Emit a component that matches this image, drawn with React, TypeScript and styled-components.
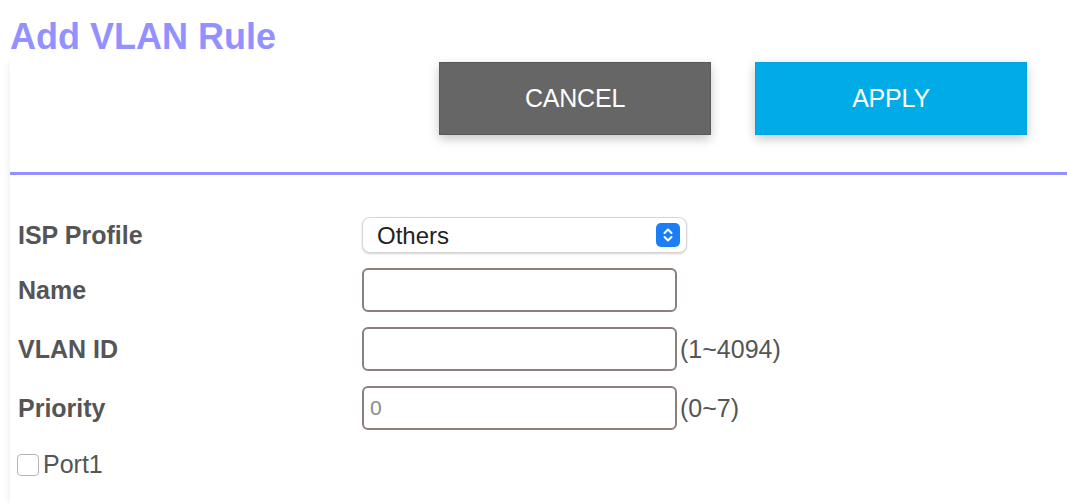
import React from 'react';
import styled, { createGlobalStyle } from 'styled-components';

const GlobalStyle = createGlobalStyle`
  html, body {
    margin: 0;
    padding: 0;
    background: #ffffff;
    font-family: "Liberation Sans", Arial, sans-serif;
  }
`;

const Page = styled.div`
  width: 1067px;
  min-height: 504px;
  box-sizing: border-box;
`;

const Title = styled.h1`
  margin: 16px 0 0 10px;
  font-size: 36px;
  line-height: 42px;
  font-weight: 700;
  color: #9391ff;
`;

const Panel = styled.div`
  margin-left: 10px;
  padding-top: 4px;
  min-height: 446px;
  box-shadow: -7px 0 6px -5px rgba(0, 0, 0, 0.06);
`;

const ButtonBar = styled.div`
  display: flex;
  justify-content: flex-end;
  gap: 44px;
  padding-right: 40px;
`;

const ActionButton = styled.button<{ $variant: 'cancel' | 'apply' }>`
  width: 272px;
  height: 73px;
  border: 1px solid ${p => (p.$variant === 'cancel' ? '#5a5a5a' : '#00a5e0')};
  background: ${p => (p.$variant === 'cancel' ? '#666666' : '#00abe6')};
  color: #ffffff;
  font-family: "Liberation Sans", Arial, sans-serif;
  font-size: 25px;
  letter-spacing: -0.2px;
  box-shadow: 0 4px 10px rgba(0, 0, 0, 0.22);
  cursor: pointer;
`;

const Divider = styled.hr`
  margin: 37px 0 0 0;
  border: none;
  height: 3px;
  background: #9391ff;
`;

const Form = styled.div`
  display: grid;
  grid-template-columns: 344px 1fr;
  row-gap: 15px;
  align-items: center;
  padding: 42px 0 0 8px;
`;

const Label = styled.div`
  font-size: 25px;
  font-weight: 700;
  color: #555555;
`;

const FieldRow = styled.div`
  display: flex;
  align-items: center;
`;

const SelectBox = styled.div`
  display: flex;
  align-items: center;
  width: 325px;
  height: 36px;
  box-sizing: border-box;
  padding: 0 6px 0 14px;
  border: 1px solid #d6d6d6;
  border-radius: 8px;
  background: #ffffff;
  box-shadow: 0 1px 2px rgba(0, 0, 0, 0.18);
`;

const NativeSelect = styled.select`
  flex: 1;
  appearance: none;
  border: none;
  outline: none;
  background: transparent;
  font-family: "Liberation Sans", Arial, sans-serif;
  font-size: 24px;
  color: #222222;
  padding: 0;
`;

const Stepper = styled.span`
  display: flex;
  width: 24px;
  height: 24px;
  border-radius: 5px;
  background: #1c7ef6;
  align-items: center;
  justify-content: center;
`;

const TextInput = styled.input`
  width: 315px;
  height: 44px;
  box-sizing: border-box;
  border: 2px solid #8a817d;
  border-radius: 6px;
  padding: 0 6px;
  font-family: "Liberation Sans", Arial, sans-serif;
  font-size: 21px;
  color: #8a8a8a;
  outline: none;
`;

const Hint = styled.span`
  margin-left: 3px;
  font-size: 25px;
  color: #555555;
`;

const CheckRow = styled.label`
  grid-column: 1 / span 2;
  display: flex;
  align-items: center;
  gap: 4px;
  margin-top: 5px;
  margin-left: -1px;
  font-size: 25px;
  color: #555555;
`;

const CheckBox = styled.input`
  appearance: none;
  width: 22px;
  height: 22px;
  margin: 0;
  border: 1.5px solid #b5b5b5;
  border-radius: 4px;
  background: #ffffff;
`;

function App() {
  return (
    <Page>
      <GlobalStyle />
      <Title>Add VLAN Rule</Title>
      <Panel>
        <ButtonBar>
          <ActionButton $variant="cancel">CANCEL</ActionButton>
          <ActionButton $variant="apply">APPLY</ActionButton>
        </ButtonBar>
        <Divider />
        <Form>
          <Label>ISP Profile</Label>
          <FieldRow>
            <SelectBox>
              <NativeSelect defaultValue="Others">
                <option>Others</option>
              </NativeSelect>
              <Stepper>
                <svg width="12" height="16" viewBox="0 0 12 16" fill="none" stroke="#ffffff" strokeWidth="2" strokeLinecap="round" strokeLinejoin="round">
                  <polyline points="2.5,6 6,2.5 9.5,6" />
                  <polyline points="2.5,10 6,13.5 9.5,10" />
                </svg>
              </Stepper>
            </SelectBox>
          </FieldRow>

          <Label>Name</Label>
          <FieldRow>
            <TextInput type="text" />
          </FieldRow>

          <Label>VLAN ID</Label>
          <FieldRow>
            <TextInput type="text" />
            <Hint>(1~4094)</Hint>
          </FieldRow>

          <Label>Priority</Label>
          <FieldRow>
            <TextInput type="text" defaultValue="0" />
            <Hint>(0~7)</Hint>
          </FieldRow>

          <CheckRow>
            <CheckBox type="checkbox" />
            Port1
          </CheckRow>
        </Form>
      </Panel>
    </Page>
  );
}

export default App;
